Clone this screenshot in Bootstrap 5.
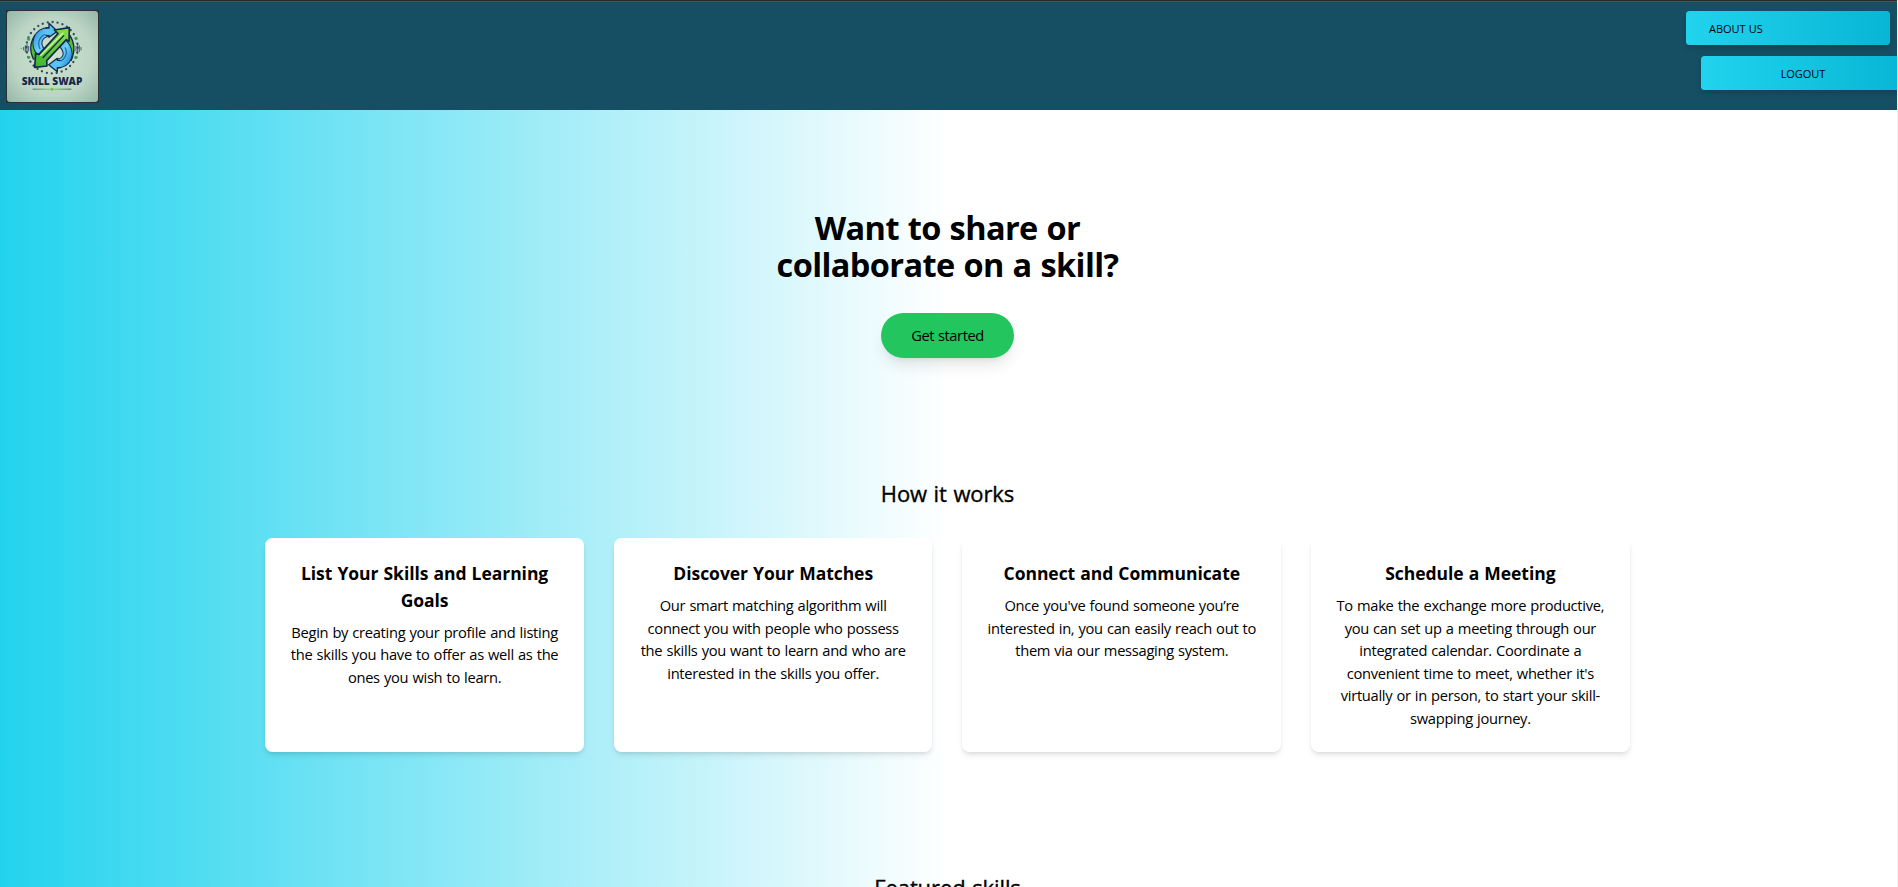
<!DOCTYPE html>
<html lang="en">
<head>
<meta charset="utf-8">
<meta name="viewport" content="width=device-width, initial-scale=1">
<title>Skill Swap</title>
<link href="https://cdn.jsdelivr.net/npm/bootstrap@5.3.0/dist/css/bootstrap.min.css" rel="stylesheet">
<style>
  html { overflow: hidden; }
  body {
    height: 100vh; overflow: hidden; color: #000;
    font-family: "Open Sans", "Noto Sans", sans-serif; font-size: 14.7px; letter-spacing: -.29px; word-spacing: .6px; line-height: 22.5px;
    border-right: 1px solid #f1f1f1;
    background: #fff;
  }
  .top-edge { height: 2px; background: linear-gradient(#2b2a2c 50%, #544f54 50%); margin-right: -1px; }
  .site-nav { height: 108px; background: #164e63; padding: 8px 0 0 6px; }
  .brand-logo { width: 93px; height: 93px; display: block; }
  .brand-name { font: 800 30.5px "Open Sans", sans-serif; letter-spacing: 0; word-spacing: 0; }
  .nav-pill {
    height: 34px; border-radius: 3.5px; color: #000; border: 0; padding: 1px 0 0; margin: 0;
    font-size: 11px; font-weight: 500; letter-spacing: -.05px; word-spacing: .5px; line-height: 34px;
    background: linear-gradient(to right, #22d3ee, #06b6d4);
    box-shadow: 0 4px 6px -1px rgba(0,0,0,.1), 0 2px 4px -2px rgba(0,0,0,.1);
  }
  .nav-actions { width: 211px; padding-top: 1px; gap: 11px; }
  .about-link { width: 204px; padding-left: 23px; }
  .logout-link { width: 204px; margin-left: 15px; }
  .page-body { height: 777px; padding-right: 2px; background: linear-gradient(to right, #22d3ee, #fff 50%); }
  .hero { padding-top: 99px; height: 364px; }
  .hero h1 { font-size: 32.5px; font-weight: 700; line-height: 37px; letter-spacing: -.6px; word-spacing: 1px; margin: 0 0 30px; }
  .btn-start {
    background: #22c55e; color: #000; width: 133px; height: 45px; padding: 0; border: 0;
    font-size: 14.7px; letter-spacing: -.43px; line-height: 44px;
    box-shadow: 0 10px 15px -3px rgba(0,0,0,.1), 0 4px 6px -4px rgba(0,0,0,.1);
  }
  .section-title { font-size: 22px; font-weight: 500; line-height: 30px; letter-spacing: -.1px; word-spacing: 1px; margin: 0; -webkit-text-stroke: .35px #000; }
  .steps { width: 72%; gap: 30px; margin: 30px auto 0; }
  .step { border: 0; border-radius: 7.5px; height: 214px; padding: 22px 0; color: #000; flex: 1 1 0;
    box-shadow: 0 4px 6px -1px rgba(0,0,0,.1), 0 2px 4px -2px rgba(0,0,0,.1); }
  .step h3 { font-size: 17.5px; font-weight: 700; line-height: 26.5px; letter-spacing: -.05px; margin: 0 0 7.5px; }
  .step p { margin: 0; white-space: nowrap; }
  .featured { margin-top: 120px; }
</style>
</head>
<body>
<div class="top-edge"></div>
<nav class="site-nav d-flex justify-content-between align-items-start overflow-hidden">
  <a href="#" aria-label="Skill Swap">
    <svg class="brand-logo" viewBox="18 30 279 279">
      <defs>
        <radialGradient id="paper" r=".72"><stop offset="0" stop-color="#cfe3cf"/><stop offset=".6" stop-color="#bcd5c4"/><stop offset="1" stop-color="#93b5a6"/></radialGradient>
        <linearGradient id="leaf" x1="0" y1="1" x2="1" y2="0"><stop offset="0" stop-color="#39b52c"/><stop offset="1" stop-color="#8be04a"/></linearGradient>
        <linearGradient id="wave" x1="0" y1="0" x2="1" y2="1"><stop offset="0" stop-color="#3aa4e6"/><stop offset=".5" stop-color="#6fd2f7"/><stop offset="1" stop-color="#2f9be2"/></linearGradient>
        <linearGradient id="rule"><stop offset="0" stop-color="#284a55"/><stop offset=".4" stop-color="#5fc93f"/><stop offset=".6" stop-color="#5fc93f"/><stop offset="1" stop-color="#1d3047"/></linearGradient>
      </defs>
      <rect x="18" y="30" width="279" height="279" fill="#2b3034"/>
      <rect x="21" y="33" width="273" height="273" rx="9" fill="url(#paper)"/>
      <circle cx="156" cy="143" r="77" fill="none" stroke="#2d4f66" stroke-width="7" stroke-linecap="round" stroke-dasharray=".1 15"/>
      <g fill="#3f9f52"><circle cx="86" cy="117" r="5"/><circle cx="228" cy="115" r="5"/><circle cx="86" cy="172" r="5"/><circle cx="228" cy="172" r="5"/><circle cx="64" cy="145" r="2"/></g>
      <path d="M71 141v10M76 136v20M81 131v30M86 138v16M243 141v10M238 136v20M233 131v30M228 138v16" stroke="#24405f" stroke-width="2.500"/>
      <g fill="none" stroke-linejoin="round">
        <path d="M112 108Q90 140 108 176M202 108Q224 140 206 180" stroke="#15284b" stroke-width="19"/>
        <path d="M112 110Q91 140 108 174M202 110Q223 140 206 178" stroke="#55bd36" stroke-width="13"/>
        <path d="M115 113Q99 140 110 166M200 118Q212 140 204 170" stroke="#1f7040" stroke-width="3"/>
        <path d="M125 158C100 132 114 97 148 96" stroke="#15284b" stroke-width="30"/>
        <path d="M188 130C216 160 202 188 170 191" stroke="#15284b" stroke-width="30"/>
        <path d="M125 158C100 132 114 97 148 96" stroke="url(#wave)" stroke-width="24"/>
        <path d="M188 130C216 160 202 188 170 191" stroke="url(#wave)" stroke-width="24"/>
        <path d="M120 147C108 122 126 101 148 100M195 142C207 165 189 185 170 187" stroke="#246db8" stroke-width="4"/>
      </g>
      <path d="M147 70L172 94 147 112V106L138 106V84H147ZM172 175V181H180V203H172V215L146 194Z" fill="#58c4f5" stroke="#15284b" stroke-width="4" stroke-linejoin="round"/>
      <path d="M135 87H149V104H135ZM170 184H183V200H170Z" fill="#58c4f5"/>
      <path d="M163 90L208 83 207 124 199 119 140 182 141 198 104 202 107 160 117 163 174 101Z" fill="url(#leaf)" stroke="#15284b" stroke-width="5" stroke-linejoin="round"/>
      <path d="M190 98L121 167" stroke="#dff6a8" stroke-width="4"/>
      <path d="M192 106L128 174" stroke="#15284b" stroke-width="4"/>
      <text class="brand-name" x="156" y="255" text-anchor="middle" textLength="182" lengthAdjust="spacingAndGlyphs" fill="#17284b">SKILL SWAP</text>
      <path d="M98 266.500h116v2H98z" fill="url(#rule)"/><circle cx="156" cy="268" r="4" fill="#63c94a"/>
    </svg>
  </a>
  <div class="nav-actions d-flex flex-column flex-shrink-0">
    <a href="#" class="btn nav-pill about-link text-start">ABOUT US</a>
    <a href="#" class="btn nav-pill logout-link">LOGOUT</a>
  </div>
</nav>
<main class="page-body text-center">
  <section class="hero">
    <h1>Want to share or<br>collaborate on a skill?</h1>
    <a href="#" class="btn btn-start rounded-pill">Get started</a>
  </section>
  <section>
    <h2 class="section-title pt-1">How it works</h2>
    <div class="steps d-flex">
      <article class="card step">
        <h3>List Your Skills and Learning<br>Goals</h3>
        <p>Begin by creating your profile and listing<br>the skills you have to offer as well as the<br>ones you wish to learn.</p>
      </article>
      <article class="card step">
        <h3>Discover Your Matches</h3>
        <p>Our smart matching algorithm will<br>connect you with people who possess<br>the skills you want to learn and who are<br>interested in the skills you offer.</p>
      </article>
      <article class="card step">
        <h3>Connect and Communicate</h3>
        <p>Once you've found someone you’re<br>interested in, you can easily reach out to<br>them via our messaging system.</p>
      </article>
      <article class="card step">
        <h3>Schedule a Meeting</h3>
        <p>To make the exchange more productive,<br>you can set up a meeting through our<br>integrated calendar. Coordinate a<br>convenient time to meet, whether it's<br>virtually or in person, to start your skill-<br>swapping journey.</p>
      </article>
    </div>
  </section>
  <section class="featured">
    <h2 class="section-title">Featured skills</h2>
  </section>
</main>
<script src="https://cdn.jsdelivr.net/npm/bootstrap@5.3.0/dist/js/bootstrap.bundle.min.js"></script>
</body>
</html>
